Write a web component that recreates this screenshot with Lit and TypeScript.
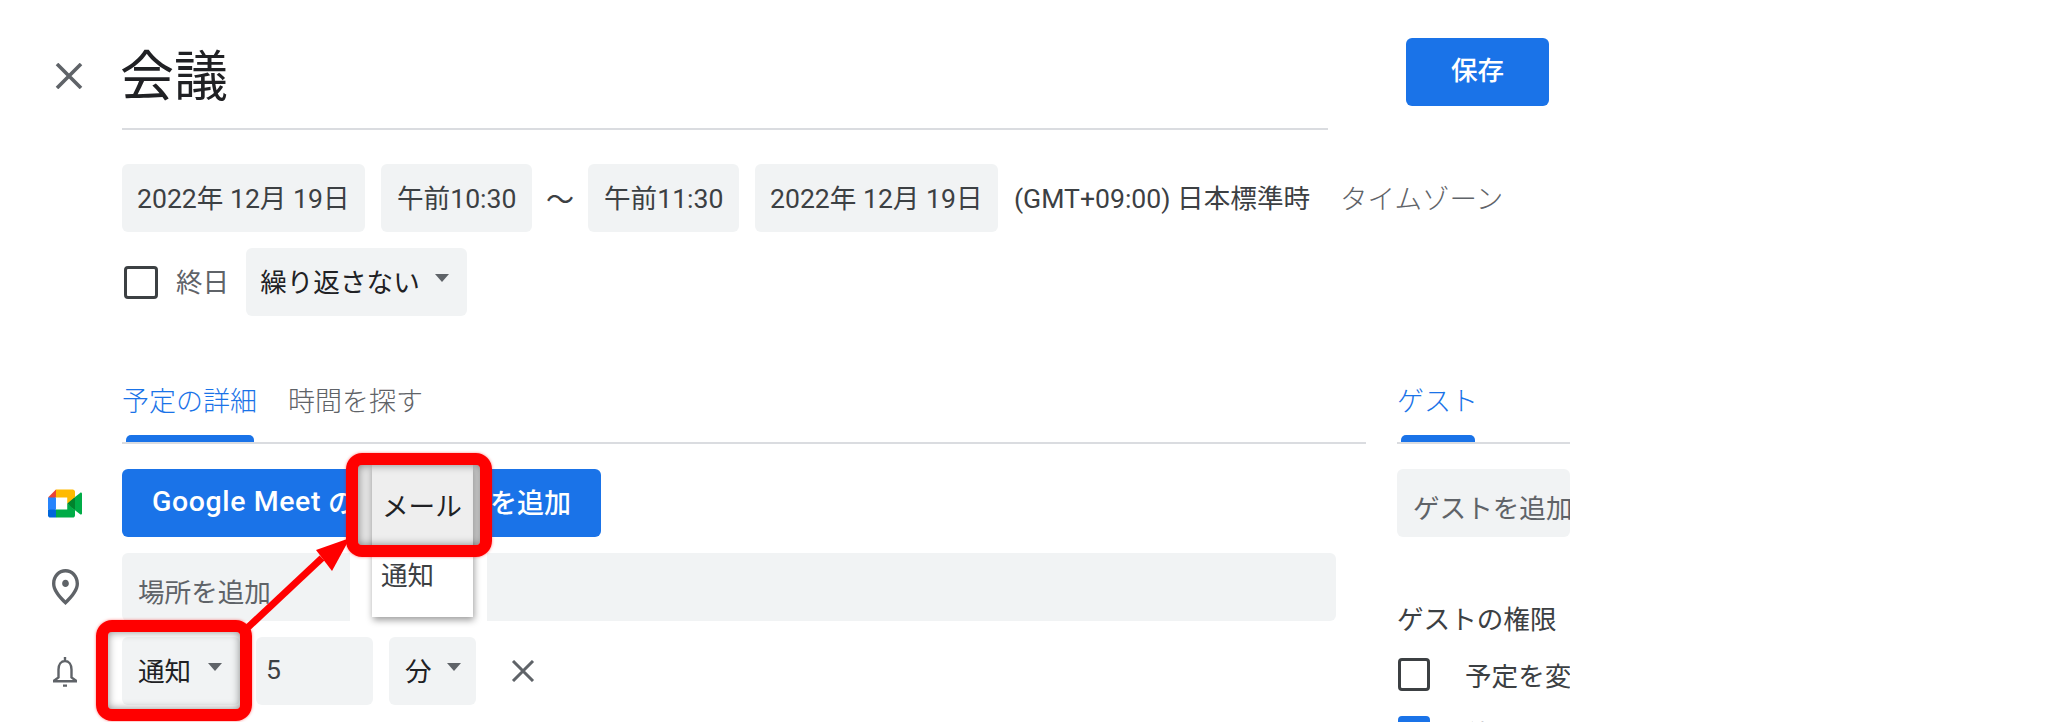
import { LitElement, html, css, svg } from "lit";
import { customElement } from "lit/decorators.js";

const caret = html`<span class="caret"></span>`;

@customElement("app-root")
export class AppRoot extends LitElement {
  static styles = css`
    :host {
      display: block;
      position: relative;
      width: 2048px;
      height: 722px;
      overflow: hidden;
      background: #fff;
      font-family: Roboto, "Noto Sans CJK JP", sans-serif;
      font-size: 26.6px;
      color: #3c4043;
    }
    .head { display: flex; height: 130px; }
    .iconcol { width: 122px; flex: none; display: flex; align-items: center; justify-content: center; padding-left: 8px; box-sizing: border-box; }
    .closecol { align-items: flex-start; padding-top: 63px; padding-left: 16px; }
    .title { width: 1206px; box-sizing: border-box; border-bottom: 2px solid #dadce0; font-size: 54px; line-height: 100px; padding-top: 28px; color: #202124; height: 130px; text-indent: -2px; }
    .save { margin: 38px 0 0 78px; width: 143px; height: 68px; border-radius: 6px; background: #1a73e8; color: #fff; font-weight: 500; display: flex; align-items: center; justify-content: center; padding-bottom: 8px; box-sizing: border-box; }
    .dates { display: flex; align-items: center; gap: 16px; margin: 34px 0 0 122px; height: 68px; }
    .chip { height: 68px; border-radius: 6px; background: #f1f3f4; display: flex; align-items: center; box-sizing: border-box; padding: 0 16px 3px; white-space: nowrap; flex: none; }
    .d { width: 243px; padding-left: 15px; padding-right: 0; }
    .t { width: 151px; padding-right: 0; }
    .tilde { width: 24px; display: flex; justify-content: center; white-space: nowrap; font-size: 28px; }
    .tz { margin-right: 14px; white-space: nowrap; padding-bottom: 3px; }
    .tzlink { color: #5f6368; font-weight: 300; font-size: 27.5px; white-space: nowrap; padding-bottom: 2px; }
    .allday { display: flex; align-items: center; margin: 16px 0 0 124px; height: 68px; }
    .box { width: 34px; height: 33px; box-sizing: border-box; border: 3px solid #3c4043; border-radius: 4px; flex: none; }
    .label { margin-left: 18px; margin-right: 17px; color: #5f6368; padding-bottom: 3px; }
    .repeat { width: 221px; color: #202124; padding-left: 14px; }
    .caret { display: inline-block; width: 0; height: 0; border: 7px solid transparent; border-top: 8px solid #5f6368; border-bottom: 0; margin-bottom: 5px; flex: none; }
    .repeat .caret { margin-left: 15px; }
    .body { display: flex; margin-top: 65px; }
    .left { width: 1366px; flex: none; }
    .right { width: 173px; margin-left: 31px; overflow: hidden; flex: none; }
    .tabs { display: flex; gap: 31px; height: 61px; border-bottom: 2px solid #dadce0; line-height: 42px; }
    .lefttabs { margin-left: 122px; }
    .tab { position: relative; color: #5f6368; font-size: 27px; white-space: nowrap; font-weight: 300; }
    .on { color: #1a73e8; }
    .on::after { content: ""; position: absolute; left: 4px; right: 3px; bottom: 0; height: 7px; background: #1a73e8; border-radius: 5px 5px 0 0; }
    .row { display: flex; align-items: center; height: 68px; margin-top: 16px; }
    .first { margin-top: 25px; }
    .meet { width: 479px; height: 68px; border-radius: 6px; background: #1a73e8; color: #fff; font-weight: 500; display: flex; align-items: center; padding-left: 30px; padding-bottom: 3px; box-sizing: border-box; white-space: nowrap; font-size: 27px; }
    .brand { font-size: 28.5px; letter-spacing: 0.6px; margin-right: 7px; }
    .input { background: #f1f3f4; height: 68px; border-radius: 6px; box-sizing: border-box; padding: 7px 16px 0; display: flex; align-items: center; color: #5f6368; }
    .loc { width: 1214px; }
    .notif { display: flex; gap: 16px; align-items: center; }
    .kind { width: 118px; color: #202124; }
    .kind .caret { margin-left: 17px; }
    .num { width: 117px; padding: 0 16px 3px 10px; color: #3c4043; }
    .unit { width: 87px; color: #202124; }
    .unit .caret { margin-left: 15px; }
    .xbtn { margin-left: 19px; display: flex; }
    .guestinput { width: 173px; white-space: nowrap; overflow: hidden; }
    .perm { margin-top: 67px; line-height: 32px; color: #3c4043; white-space: nowrap; }
    .permrow { display: flex; align-items: center; margin-top: 22px; height: 33px; white-space: nowrap; }
    .permrow .box { margin-left: 1px; width: 32px; }
    .permrow span { margin-left: 35px; }
    .checked { background: #1a73e8; border-color: #1a73e8; }
    .permrow.second { margin-top: 25px; }
    .panel { position: absolute; left: 350px; top: 553px; width: 137px; height: 70px; background: #fff; }
    .backing { position: absolute; left: 357px; top: 465px; width: 125px; height: 80px; background: #e4e4e4; }
    .menu { position: absolute; left: 372px; top: 465px; width: 101px; height: 152px; background: #fff; box-shadow: 1px 3px 7px rgba(0, 0, 0, 0.4); color: #202124; }
    .mail { height: 80px; background: #eee; padding: 26px 0 0 10px; box-sizing: border-box; line-height: 32px; white-space: nowrap; }
    .notice { padding: 15px 0 0 9px; line-height: 32px; color: #3c4043; }
    .red { position: absolute; box-sizing: border-box; border: 12px solid #f00; border-radius: 16px; box-shadow: inset 0 0 9px rgba(0, 0, 0, 0.45), 0 0 3px rgba(255, 0, 0, 0.5); }
    .redtop { left: 346px; top: 453px; width: 146px; height: 104px; }
    .redbottom { left: 96px; top: 620px; width: 156px; height: 101px; }
    .arrow { position: absolute; left: 0; top: 0; }
  `;

  render() {
    return html`
      <div class="head">
        <div class="iconcol closecol">
          <svg width="30" height="26" viewBox="0 0 30 26"><path d="M3 1 27 25M27 1 3 25" stroke="#5f6368" stroke-width="3.6" fill="none"/></svg>
        </div>
        <div class="title">会議</div>
        <div class="save">保存</div>
      </div>
      <div class="dates">
        <div class="chip d">2022年 12月 19日</div>
        <div class="chip t">午前10:30</div>
        <div class="tilde">〜</div>
        <div class="chip t">午前11:30</div>
        <div class="chip d">2022年 12月 19日</div>
        <div class="tz">(GMT+09:00) 日本標準時</div>
        <div class="tzlink">タイムゾーン</div>
      </div>
      <div class="allday">
        <div class="box"></div>
        <div class="label">終日</div>
        <div class="chip repeat">繰り返さない${caret}</div>
      </div>
      <div class="body">
        <div class="left">
          <div class="tabs lefttabs">
            <div class="tab on">予定の詳細</div>
            <div class="tab">時間を探す</div>
          </div>
          <div class="row first">
            <div class="iconcol">
              <svg width="34" height="29" viewBox="0 0 87.5 72">
                <path fill="#00832d" d="M49.5 36l8.53 9.75 11.47 7.33 2-17.02-2-16.64-11.69 6.44z"/>
                <path fill="#0066da" d="M0 51.5V66c0 3.315 2.685 6 6 6h14.5l3-10.96-3-9.54-9.95-3z"/>
                <path fill="#e94235" d="M20.5 0L0 20.5l10.55 3 9.95-3 2.95-9.41z"/>
                <path fill="#2684fc" d="M20.5 20.5H0v31h20.5z"/>
                <path fill="#00ac47" d="M82.6 8.68L69.5 19.42v33.66l13.16 10.79c1.97 1.54 4.85.135 4.85-2.37V11c0-2.535-2.945-3.925-4.91-2.32zM49.5 36v15.5h-29V72h43c3.315 0 6-2.685 6-6V53.08z"/>
                <path fill="#ffba00" d="M63.5 0h-43v20.5h29V36l20-16.57V6c0-3.315-2.685-6-6-6z"/>
              </svg>
            </div>
            <div class="meet"><span class="brand">Google Meet</span>のビデオ会議を追加</div>
          </div>
          <div class="row">
            <div class="iconcol">
              <svg width="27" height="36" viewBox="4 2 16 20" preserveAspectRatio="none" fill="#5f6368"><path d="M12 12c-1.1 0-2-.9-2-2s.9-2 2-2 2 .9 2 2-.9 2-2 2zm6-1.8C18 6.57 15.35 4 12 4s-6 2.57-6 6.2c0 2.34 1.95 5.44 6 9.14 4.05-3.7 6-6.8 6-9.14zM12 2c4.2 0 8 3.22 8 8.2 0 3.32-2.67 7.25-8 11.8-5.33-4.55-8-8.48-8-11.8C4 5.22 7.8 2 12 2z"/></svg>
            </div>
            <div class="input loc">場所を追加</div>
          </div>
          <div class="row">
            <div class="iconcol">
              <svg width="26" height="31" viewBox="0 0 26 31" fill="none" stroke="#5f6368" stroke-width="2.4"><path d="M1 25.2h24M1.6 25l4.9-3.6V13.5C6.5 8.5 9 5 13 5s6.5 3.500 6.500 8.500v7.900l4.900 3.600M13 1v4M11 29.600h4"/></svg>
            </div>
            <div class="notif">
              <div class="chip kind">通知${caret}</div>
              <div class="chip num">5</div>
              <div class="chip unit">分${caret}</div>
              <div class="xbtn">
                <svg width="24" height="22" viewBox="0 0 24 22"><path d="M2 1 22 21M22 1 2 21" stroke="#5f6368" stroke-width="3" fill="none"/></svg>
              </div>
            </div>
          </div>
        </div>
        <div class="right">
          <div class="tabs">
            <div class="tab on">ゲスト</div>
          </div>
          <div class="row first">
            <div class="input guestinput">ゲストを追加</div>
          </div>
          <div class="perm">ゲストの権限</div>
          <div class="permrow"><div class="box"></div><span>予定を変更する</span></div>
          <div class="permrow second"><div class="box checked"></div><span>他のユーザーを招待する</span></div>
        </div>
      </div>

      <div class="panel"></div>
      <div class="backing"></div>
      <div class="menu">
        <div class="mail">メール</div>
        <div class="notice">通知</div>
      </div>
      <div class="red redtop"></div>
      <div class="red redbottom"></div>
      <svg class="arrow" width="2048" height="722" viewBox="0 0 2048 722">
        ${svg`<path d="M243 632 322 558" stroke="#f00" stroke-width="7" fill="none"/><path d="M350 538 316 550 332 571z" fill="#f00"/>`}
      </svg>
    `;
  }
}
